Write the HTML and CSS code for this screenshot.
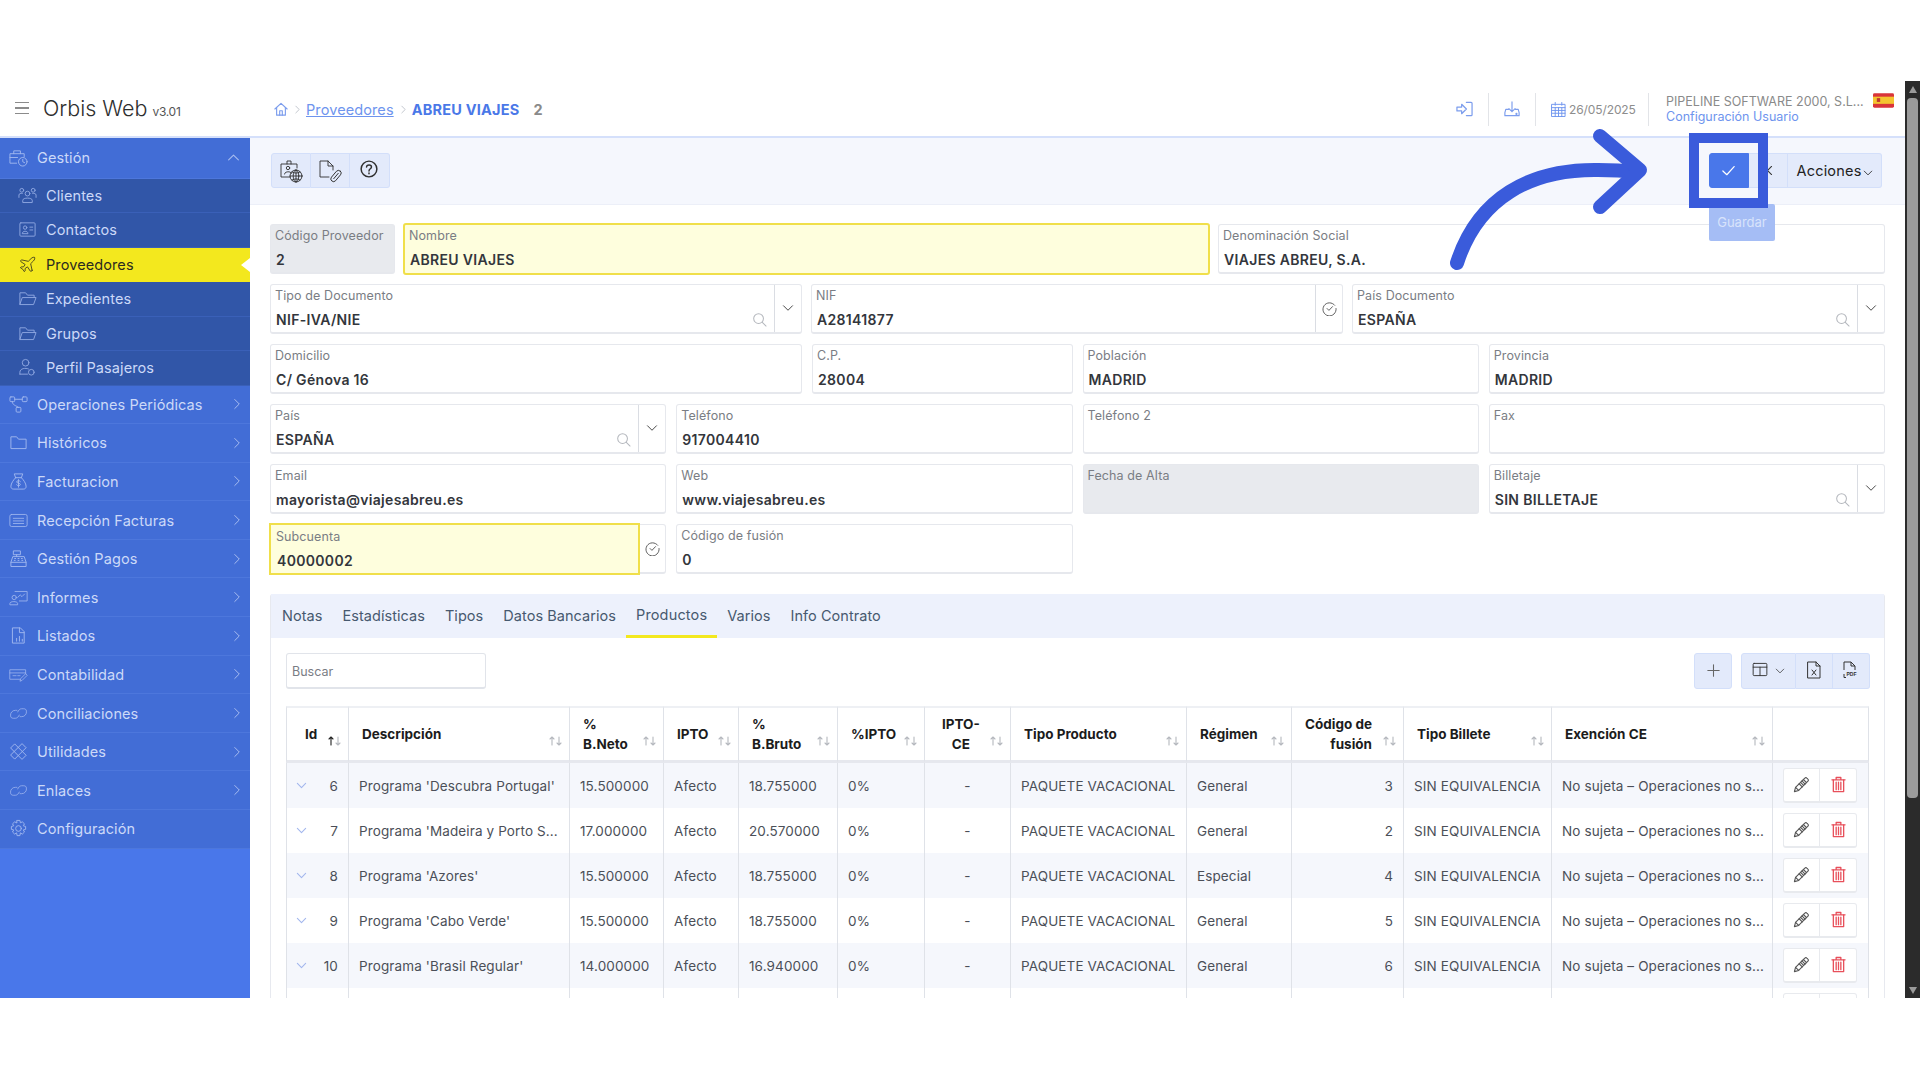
FILE: index.html
```html
<!DOCTYPE html>
<html lang="es">
<head>
  <meta charset="UTF-8">
  <title>Orbis Web - Proveedores</title>
  <link rel="stylesheet" href="styles.css">
</head>
<body>
  <svg class="sprite" width="0" height="0">
    <symbol id="i-chev-down" viewBox="0 0 16 16"><path d="M2 5l6 6 6-6"/></symbol>
    <symbol id="i-chev-right" viewBox="0 0 16 16"><path d="M5 2l6 6-6 6"/></symbol>
    <symbol id="i-chev-up" viewBox="0 0 16 16"><path d="M2 11l6-6 6 6"/></symbol>
    <symbol id="i-search" viewBox="0 0 16 16"><circle cx="7" cy="7" r="5.2"/><path d="M11 11l4 4"/></symbol>
    <symbol id="i-circle-check" viewBox="0 0 16 16"><path d="M13.6 4.6A7 7 0 1 0 15 8"/><path d="M5.4 8l2 2 3.8-4"/></symbol>
    <symbol id="i-home" viewBox="0 0 16 16"><path d="M1 8l7-6.5L15 8"/><path d="M3 6.5V15h10V6.5"/><path d="M6.5 15v-5h3v5"/></symbol>
    <symbol id="i-login" viewBox="0 0 18 16"><path d="M1 6h5V3l5 5-5 5v-3H1z"/><path d="M11 1h5a1 1 0 0 1 1 1v12a1 1 0 0 1-1 1h-5"/></symbol>
    <symbol id="i-download" viewBox="0 0 18 18"><path d="M9 1v11M5.5 8.5L9 12l3.5-3.5"/><path d="M5 9.5H2L1 13v3.5h16V13l-1-3.500h-3"/><circle cx="14" cy="14.500" r=".6"/></symbol>
    <symbol id="i-calendar" viewBox="0 0 16 16"><rect x="1" y="2.500" width="14" height="13"/><path d="M1 6h14M1 9h14M1 12h14M4.500 6v9.500M8 6v9.500M11.500 6v9.500M4.500 .5v3M11.500 .5v3"/></symbol>
    <symbol id="i-id-globe" viewBox="0 0 24 24"><path d="M11 18H2V5h16v4"/><path d="M8 5V2h4v3"/><circle cx="9" cy="9" r="1.700"/><path d="M5.500 15c0-3 7-3 7-.5"/><circle cx="17" cy="17" r="6"/><path d="M11 17h12M17 11v12M13 13c3 1.500 5 1.500 8 0M13 21c3-1.500 5-1.500 8 0"/><ellipse cx="17" cy="17" rx="2.800" ry="6"/></symbol>
    <symbol id="i-file-clip" viewBox="0 0 24 24"><path d="M11 18H2V2h8l5 5v4"/><path d="M10 2v5h5"/><g transform="rotate(40 18 17)"><rect x="15.300" y="10.500" width="5.400" height="13" rx="2.700"/><path d="M18 13.500v7"/></g></symbol>
    <symbol id="i-help" viewBox="0 0 16 16"><circle cx="8" cy="8" r="7"/><path d="M5.800 6.200C6 3.800 10.200 3.800 10.200 6.200 10.200 7.800 8 7.800 8 9.700"/><path d="M8 11.500v.8"/></symbol>
    <symbol id="i-check" viewBox="0 0 16 16"><path d="M2 8.500L6.200 12.500 14 3.800"/></symbol>
    <symbol id="i-x" viewBox="0 0 16 16"><path d="M3 3l10 10M13 3L3 13"/></symbol>
    <symbol id="i-plus" viewBox="0 0 16 16"><path d="M8 1v14M1 8h14"/></symbol>
    <symbol id="i-columns" viewBox="0 0 16 16"><rect x=".7" y="1.500" width="14.600" height="13" rx="1"/><path d="M.7 5.500h14.600M8 5.500v9"/></symbol>
    <symbol id="i-file-x" viewBox="0 0 14 18"><path d="M1 1h8l4 4v12H1z"/><path d="M9 1v4h4"/><path d="M5 9l4 5M9 9l-4 5"/></symbol>
    <symbol id="i-pencil" viewBox="0 0 18 18"><path d="M1.500 16.500l1.200-4.500L12.500 2.200a1.500 1.500 0 0 1 2.200 0l1.100 1.100a1.500 1.500 0 0 1 0 2.200L6 15.300z"/><path d="M11 3.700l3.300 3.300M9.500 5.200l3.300 3.300M8 6.700l3.300 3.300M6.500 8.200l3.300 3.300M2.700 12l3.300 3.300"/></symbol>
    <symbol id="i-trash" viewBox="0 0 16 18"><path d="M1 4h14M5.500 4V1.500h5V4"/><path d="M2.500 4v12.500h11V4"/><path d="M5.500 6.500v8M8 6.500v8M10.500 6.500v8"/></symbol>
    <symbol id="i-briefcase" viewBox="0 0 20 20"><path d="M8 16H1V6h15v3"/><path d="M5 6V3h7v3M1 10h8"/><circle cx="14.500" cy="14.500" r="4.500"/><path d="M14.500 12v2.500l2 1"/></symbol>
    <symbol id="i-users" viewBox="0 0 20 20"><circle cx="10" cy="8" r="2.500"/><circle cx="4" cy="4.500" r="2"/><circle cx="16" cy="4.500" r="2"/><path d="M5 17v-2c0-3 10-3 10 0v2z"/><path d="M1 12V9.500c0-1.500 2-2 3.500-1.700M19 12V9.500c0-1.500-2-2-3.500-1.700"/></symbol>
    <symbol id="i-contact" viewBox="0 0 20 20"><rect x="2" y="3" width="16" height="14" rx="1"/><circle cx="7.500" cy="8" r="1.800"/><path d="M4.500 14c0-3 6-3 6 0zM12.500 7.500h3M12.500 10.500h3"/></symbol>
    <symbol id="i-plane" viewBox="0 0 24 24"><path d="M17.800 19.200L16 11l3.500-3.500C21 6 21.500 4 21 3c-1-.5-3 0-4.500 1.500L13 8 4.800 6.200c-.5-.1-.9.1-1.100.5l-.3.5c-.2.5-.1 1 .3 1.300L9 12l-2 3H4l-1 1 3 2 2 3 1-1v-3l3-2 3.500 5.300c.3.400.8.500 1.300.3l.5-.2c.4-.3.6-.7.500-1.200z"/></symbol>
    <symbol id="i-folder-open" viewBox="0 0 20 20"><path d="M2 16V4h6l2 2.500h7V9"/><path d="M2 16l2.500-7H19l-2.500 7z"/></symbol>
    <symbol id="i-passenger" viewBox="0 0 20 20"><circle cx="8" cy="5" r="3.500"/><path d="M2 17v-2c0-4 6-5 9-3.500"/><path d="M2 17h8"/><circle cx="14" cy="15" r="3"/></symbol>
    <symbol id="i-nodes" viewBox="0 0 20 20"><rect x="1" y="2" width="5" height="5" rx="1"/><rect x="14" y="2" width="5" height="5" rx="1"/><rect x="7.500" y="13" width="5" height="5" rx="1"/><path d="M6 4.500h8M3.500 7c0 4 4 4 6.500 6"/></symbol>
    <symbol id="i-folder" viewBox="0 0 20 20"><path d="M2 16V4h6l2 2.500h8V16z"/></symbol>
    <symbol id="i-bag" viewBox="0 0 20 20"><path d="M7 6L5.500 2h9L13 6"/><path d="M7 6h6c2 2 5 6 5 9 0 2-1 3-3 3H5c-2 0-3-1-3-3 0-3 3-7 5-9z"/><path d="M12 10c-1-1.500-4-1-4 .5s4 1 4 2.500-3 2-4 .5M10 8v8"/></symbol>
    <symbol id="i-list-box" viewBox="0 0 22 20"><rect x="1" y="3" width="20" height="14" rx="2"/><path d="M5 7.500h12M5 10.500h12M5 13.500h12"/></symbol>
    <symbol id="i-register" viewBox="0 0 20 20"><path d="M2 18v-4l2-6h12l2 6v4z"/><path d="M2 14h16"/><rect x="5" y="2" width="7" height="4"/><path d="M8 6v2M6 10h1M9.500 10h1M13 10h1M5.500 12h1M9.500 12h1M13.500 12h1"/></symbol>
    <symbol id="i-report" viewBox="0 0 22 20"><path d="M7 3h14v11H12"/><path d="M10 10l3-3 2 2 3-3"/><circle cx="6" cy="10" r="2.500"/><path d="M1 18v-1c0-3 9-3 9 0v1z"/></symbol>
    <symbol id="i-file-bars" viewBox="0 0 20 20"><path d="M4 2h8l4 4v12H4z"/><path d="M11 2v5h5"/><path d="M8 16v-3M11 16v-5M14 16v-2"/></symbol>
    <symbol id="i-card-pen" viewBox="0 0 24 20"><path d="M14 16H1V4h20v5"/><path d="M1 8h20"/><path d="M5 11.500h4M11 11.500h3"/><path d="M14 18l1-3 6-6 2 2-6 6z"/></symbol>
    <symbol id="i-link" viewBox="0 0 24 20"><path d="M10 6H8a6 6 0 0 0-6 7c0 2 1.500 3 3.500 3H8c2.500 0 4-2 5-4"/><path d="M14 14h2a6 6 0 0 0 6-7c0-2-1.500-3-3.500-3H16c-2.500 0-4 2-5 4"/></symbol>
    <symbol id="i-tools" viewBox="0 0 20 20"><path d="M2 6l4-4 12 12-4 4z"/><path d="M14 2l4 4-12 12-4-4z"/></symbol>
    <symbol id="i-gear" viewBox="0 0 20 20"><circle cx="10" cy="10" r="3"/><path d="M8.500 1.500h3l.5 2.500 2-1 2.300 2.100-1.300 2 2.500.8v3l-2.500.6 1.300 2.200-2.300 2.200-2-1.300-.5 2.900h-3l-.5-2.900-2 1.300-2.300-2.200 1.300-2.200-2.500-.6v-3l2.500-.8-1.300-2 2.300-2.100 2 1z"/></symbol>
    <symbol id="i-sort" viewBox="0 0 13 10"><path class="sort-up" d="M3 9V1M1 3l2-2 2 2"/><path d="M10 1v8M8 7l2 2 2-2"/></symbol>
  </svg>

  <div class="page">
    <div class="frame">
      <header class="topbar">
        <div class="brand">
          <div class="burger"><span></span><span></span><span></span></div>
          <span class="brand-name">Orbis Web</span>
          <span class="brand-version">v3.01</span>
        </div>
        <nav class="crumbs">
          <svg class="ic crumb-home"><use href="#i-home"/></svg>
          <svg class="ic crumb-sep"><use href="#i-chev-right"/></svg>
          <a class="crumb-link">Proveedores</a>
          <svg class="ic crumb-sep"><use href="#i-chev-right"/></svg>
          <span class="crumb-current">ABREU VIAJES</span>
          <span class="crumb-id">2</span>
        </nav>
        <div class="top-tools">
          <div class="top-cell"><svg class="ic top-icon login"><use href="#i-login"/></svg></div>
          <div class="top-cell"><svg class="ic top-icon"><use href="#i-download"/></svg></div>
          <div class="top-cell date-cell"><svg class="ic top-icon cal"><use href="#i-calendar"/></svg><span>26/05/2025</span></div>
          <div class="user-cell">
            <div class="company">PIPELINE SOFTWARE 2000, S.L...</div>
            <a class="user-config">Configuración Usuario</a>
          </div>
          <svg class="flag" viewBox="0 0 22 15"><rect width="22" height="15" rx="1.500" fill="#d9343a"/><rect y="3.500" width="22" height="7.500" fill="#f4c430"/><rect x="4" y="5" width="3.500" height="4" fill="#c0392b"/></svg>
        </div>
      </header>

      <div class="app">
        <aside class="sidebar">
          <div class="nav-item nav-open"><svg class="ic nav-icon"><use href="#i-briefcase"/></svg><span>Gestión</span><svg class="ic nav-chev up"><use href="#i-chev-up"/></svg></div>
          <div class="sub-item"><svg class="ic nav-icon"><use href="#i-users"/></svg><span>Clientes</span></div>
          <div class="sub-item"><svg class="ic nav-icon"><use href="#i-contact"/></svg><span>Contactos</span></div>
          <div class="sub-item active"><svg class="ic nav-icon"><use href="#i-plane"/></svg><span>Proveedores</span></div>
          <div class="sub-item"><svg class="ic nav-icon"><use href="#i-folder-open"/></svg><span>Expedientes</span></div>
          <div class="sub-item"><svg class="ic nav-icon"><use href="#i-folder-open"/></svg><span>Grupos</span></div>
          <div class="sub-item"><svg class="ic nav-icon"><use href="#i-passenger"/></svg><span>Perfil Pasajeros</span></div>
          <div class="nav-item"><svg class="ic nav-icon"><use href="#i-nodes"/></svg><span>Operaciones Periódicas</span><svg class="ic nav-chev"><use href="#i-chev-right"/></svg></div>
          <div class="nav-item"><svg class="ic nav-icon"><use href="#i-folder"/></svg><span>Históricos</span><svg class="ic nav-chev"><use href="#i-chev-right"/></svg></div>
          <div class="nav-item"><svg class="ic nav-icon"><use href="#i-bag"/></svg><span>Facturacion</span><svg class="ic nav-chev"><use href="#i-chev-right"/></svg></div>
          <div class="nav-item"><svg class="ic nav-icon"><use href="#i-list-box"/></svg><span>Recepción Facturas</span><svg class="ic nav-chev"><use href="#i-chev-right"/></svg></div>
          <div class="nav-item"><svg class="ic nav-icon"><use href="#i-register"/></svg><span>Gestión Pagos</span><svg class="ic nav-chev"><use href="#i-chev-right"/></svg></div>
          <div class="nav-item"><svg class="ic nav-icon"><use href="#i-report"/></svg><span>Informes</span><svg class="ic nav-chev"><use href="#i-chev-right"/></svg></div>
          <div class="nav-item"><svg class="ic nav-icon"><use href="#i-file-bars"/></svg><span>Listados</span><svg class="ic nav-chev"><use href="#i-chev-right"/></svg></div>
          <div class="nav-item"><svg class="ic nav-icon"><use href="#i-card-pen"/></svg><span>Contabilidad</span><svg class="ic nav-chev"><use href="#i-chev-right"/></svg></div>
          <div class="nav-item"><svg class="ic nav-icon"><use href="#i-link"/></svg><span>Conciliaciones</span><svg class="ic nav-chev"><use href="#i-chev-right"/></svg></div>
          <div class="nav-item"><svg class="ic nav-icon"><use href="#i-tools"/></svg><span>Utilidades</span><svg class="ic nav-chev"><use href="#i-chev-right"/></svg></div>
          <div class="nav-item"><svg class="ic nav-icon"><use href="#i-link"/></svg><span>Enlaces</span><svg class="ic nav-chev"><use href="#i-chev-right"/></svg></div>
          <div class="nav-item"><svg class="ic nav-icon"><use href="#i-gear"/></svg><span>Configuración</span></div>
        </aside>

        <main class="workspace">
          <div class="toolbar">
            <div class="btn-group">
              <button class="tool-btn"><svg class="ic tool-icon"><use href="#i-id-globe"/></svg></button>
              <button class="tool-btn"><svg class="ic tool-icon"><use href="#i-file-clip"/></svg></button>
              <button class="tool-btn"><svg class="ic tool-help"><use href="#i-help"/></svg></button>
            </div>
            <div class="btn-group">
              <button class="tool-btn save-btn"><svg class="ic save-icon"><use href="#i-check"/></svg></button>
              <button class="tool-btn"><svg class="ic close-icon"><use href="#i-x"/></svg></button>
              <button class="tool-btn actions-btn">Acciones<svg class="ic actions-chev"><use href="#i-chev-down"/></svg></button>
            </div>
          </div>

          <section class="form">
            <div class="form-row row-head">
              <div class="field readonly"><label>Código Proveedor</label><div class="value">2</div></div>
              <div class="field required"><label>Nombre</label><div class="value">ABREU VIAJES</div></div>
              <div class="field"><label>Denominación Social</label><div class="value">VIAJES ABREU, S.A.</div></div>
            </div>
            <div class="form-row row-thirds">
              <div class="field combo">
                <div class="field-main"><label>Tipo de Documento</label><div class="value">NIF-IVA/NIE<svg class="ic field-search"><use href="#i-search"/></svg></div></div>
                <div class="addon"><svg class="ic addon-chev"><use href="#i-chev-down"/></svg></div>
              </div>
              <div class="field combo">
                <div class="field-main"><label>NIF</label><div class="value">A28141877</div></div>
                <div class="addon"><svg class="ic addon-check"><use href="#i-circle-check"/></svg></div>
              </div>
              <div class="field combo">
                <div class="field-main"><label>País Documento</label><div class="value">ESPAÑA<svg class="ic field-search"><use href="#i-search"/></svg></div></div>
                <div class="addon"><svg class="ic addon-chev"><use href="#i-chev-down"/></svg></div>
              </div>
            </div>
            <div class="form-row row-address">
              <div class="field"><label>Domicilio</label><div class="value">C/ Génova 16</div></div>
              <div class="field"><label>C.P.</label><div class="value">28004</div></div>
              <div class="field"><label>Población</label><div class="value">MADRID</div></div>
              <div class="field"><label>Provincia</label><div class="value">MADRID</div></div>
            </div>
            <div class="form-row row-quarters">
              <div class="field combo">
                <div class="field-main"><label>País</label><div class="value">ESPAÑA<svg class="ic field-search"><use href="#i-search"/></svg></div></div>
                <div class="addon"><svg class="ic addon-chev"><use href="#i-chev-down"/></svg></div>
              </div>
              <div class="field"><label>Teléfono</label><div class="value">917004410</div></div>
              <div class="field"><label>Teléfono 2</label><div class="value"></div></div>
              <div class="field"><label>Fax</label><div class="value"></div></div>
            </div>
            <div class="form-row row-quarters">
              <div class="field"><label>Email</label><div class="value">mayorista@viajesabreu.es</div></div>
              <div class="field"><label>Web</label><div class="value">www.viajesabreu.es</div></div>
              <div class="field readonly"><label>Fecha de Alta</label><div class="value"></div></div>
              <div class="field combo">
                <div class="field-main"><label>Billetaje</label><div class="value">SIN BILLETAJE<svg class="ic field-search"><use href="#i-search"/></svg></div></div>
                <div class="addon"><svg class="ic addon-chev"><use href="#i-chev-down"/></svg></div>
              </div>
            </div>
            <div class="form-row row-quarters">
              <div class="field combo">
                <div class="field-main required"><label>Subcuenta</label><div class="value">40000002</div></div>
                <div class="addon plain"><svg class="ic addon-check"><use href="#i-circle-check"/></svg></div>
              </div>
              <div class="field"><label>Código de fusión</label><div class="value">0</div></div>
            </div>
          </section>

          <section class="tabs-panel">
            <div class="tabs">
              <a class="tab">Notas</a>
              <a class="tab">Estadísticas</a>
              <a class="tab">Tipos</a>
              <a class="tab">Datos Bancarios</a>
              <a class="tab active">Productos</a>
              <a class="tab">Varios</a>
              <a class="tab">Info Contrato</a>
            </div>
            <div class="tab-body">
              <div class="table-tools">
                <div class="search-box">Buscar</div>
                <div class="table-actions">
                  <div class="btn-group"><button class="tool-btn add-btn"><svg class="ic plus-icon"><use href="#i-plus"/></svg></button></div>
                  <div class="btn-group">
                    <button class="tool-btn columns-btn"><svg class="ic columns-icon"><use href="#i-columns"/></svg><svg class="ic columns-chev"><use href="#i-chev-down"/></svg></button>
                    <button class="tool-btn export-btn"><svg class="ic file-icon"><use href="#i-file-x"/></svg></button>
                    <button class="tool-btn export-btn"><svg class="file-pdf" viewBox="0 0 18 18"><path d="M2 9V1h7l4 4v4M9 1v4h4M2 13v3.500h2"/><text x="4.500" y="14.500" class="pdf-label">PDF</text></svg></button>
                  </div>
                </div>
              </div>

              <table class="grid">
                <thead>
                  <tr>
                    <th class="th-id"><div class="th-in"><span>Id</span><svg class="ic sort sorted"><use href="#i-sort"/></svg></div></th>
                    <th><div class="th-in"><span>Descripción</span><svg class="ic sort"><use href="#i-sort"/></svg></div></th>
                    <th><div class="th-in"><span>%<br>B.Neto</span><svg class="ic sort"><use href="#i-sort"/></svg></div></th>
                    <th><div class="th-in"><span>IPTO</span><svg class="ic sort"><use href="#i-sort"/></svg></div></th>
                    <th><div class="th-in"><span>%<br>B.Bruto</span><svg class="ic sort"><use href="#i-sort"/></svg></div></th>
                    <th><div class="th-in"><span>%IPTO</span><svg class="ic sort"><use href="#i-sort"/></svg></div></th>
                    <th><div class="th-in th-center"><span>IPTO-<br>CE</span><svg class="ic sort"><use href="#i-sort"/></svg></div></th>
                    <th><div class="th-in"><span>Tipo Producto</span><svg class="ic sort"><use href="#i-sort"/></svg></div></th>
                    <th><div class="th-in"><span>Régimen</span><svg class="ic sort"><use href="#i-sort"/></svg></div></th>
                    <th><div class="th-in th-right"><span>Código de<br>fusión</span><svg class="ic sort"><use href="#i-sort"/></svg></div></th>
                    <th><div class="th-in"><span>Tipo Billete</span><svg class="ic sort"><use href="#i-sort"/></svg></div></th>
                    <th><div class="th-in"><span>Exención CE</span><svg class="ic sort"><use href="#i-sort"/></svg></div></th>
                    <th></th>
                  </tr>
                </thead>
                <tbody>
                  <tr>
                    <td class="td-id"><svg class="ic row-chev"><use href="#i-chev-down"/></svg>6</td>
                    <td>Programa 'Descubra Portugal'</td><td>15.500000</td><td>Afecto</td><td>18.755000</td><td>0%</td><td class="center">-</td>
                    <td>PAQUETE VACACIONAL</td><td>General</td><td class="right">3</td><td>SIN EQUIVALENCIA</td><td>No sujeta – Operaciones no s...</td>
                    <td><div class="row-actions"><button><svg class="ic pencil"><use href="#i-pencil"/></svg></button><button><svg class="ic trash"><use href="#i-trash"/></svg></button></div></td>
                  </tr>
                  <tr>
                    <td class="td-id"><svg class="ic row-chev"><use href="#i-chev-down"/></svg>7</td>
                    <td>Programa 'Madeira y Porto S...</td><td>17.000000</td><td>Afecto</td><td>20.570000</td><td>0%</td><td class="center">-</td>
                    <td>PAQUETE VACACIONAL</td><td>General</td><td class="right">2</td><td>SIN EQUIVALENCIA</td><td>No sujeta – Operaciones no s...</td>
                    <td><div class="row-actions"><button><svg class="ic pencil"><use href="#i-pencil"/></svg></button><button><svg class="ic trash"><use href="#i-trash"/></svg></button></div></td>
                  </tr>
                  <tr>
                    <td class="td-id"><svg class="ic row-chev"><use href="#i-chev-down"/></svg>8</td>
                    <td>Programa 'Azores'</td><td>15.500000</td><td>Afecto</td><td>18.755000</td><td>0%</td><td class="center">-</td>
                    <td>PAQUETE VACACIONAL</td><td>Especial</td><td class="right">4</td><td>SIN EQUIVALENCIA</td><td>No sujeta – Operaciones no s...</td>
                    <td><div class="row-actions"><button><svg class="ic pencil"><use href="#i-pencil"/></svg></button><button><svg class="ic trash"><use href="#i-trash"/></svg></button></div></td>
                  </tr>
                  <tr>
                    <td class="td-id"><svg class="ic row-chev"><use href="#i-chev-down"/></svg>9</td>
                    <td>Programa 'Cabo Verde'</td><td>15.500000</td><td>Afecto</td><td>18.755000</td><td>0%</td><td class="center">-</td>
                    <td>PAQUETE VACACIONAL</td><td>General</td><td class="right">5</td><td>SIN EQUIVALENCIA</td><td>No sujeta – Operaciones no s...</td>
                    <td><div class="row-actions"><button><svg class="ic pencil"><use href="#i-pencil"/></svg></button><button><svg class="ic trash"><use href="#i-trash"/></svg></button></div></td>
                  </tr>
                  <tr>
                    <td class="td-id"><svg class="ic row-chev"><use href="#i-chev-down"/></svg>10</td>
                    <td>Programa 'Brasil Regular'</td><td>14.000000</td><td>Afecto</td><td>16.940000</td><td>0%</td><td class="center">-</td>
                    <td>PAQUETE VACACIONAL</td><td>General</td><td class="right">6</td><td>SIN EQUIVALENCIA</td><td>No sujeta – Operaciones no s...</td>
                    <td><div class="row-actions"><button><svg class="ic pencil"><use href="#i-pencil"/></svg></button><button><svg class="ic trash"><use href="#i-trash"/></svg></button></div></td>
                  </tr>
                  <tr>
                    <td></td><td></td><td></td><td></td><td></td><td></td><td></td><td></td><td></td><td></td><td></td><td></td>
                    <td><div class="row-actions"><button></button><button></button></div></td>
                  </tr>
                </tbody>
              </table>
            </div>
          </section>
        </main>
      </div>
    </div>

    <div class="scrollbar">
      <div class="scroll-arrow arrow-up"></div>
      <div class="scroll-track"><div class="scroll-thumb"></div></div>
      <div class="scroll-arrow arrow-down"></div>
    </div>

    <div class="tooltip">Guardar</div>
    <svg class="annotation" viewBox="0 0 1920 1080">
      <path d="M1457 263C1478 198 1530 169 1598 170Q1620 170 1634 172"/>
      <path d="M1600 136L1640 170L1600 207"/>
      <rect x="1694" y="138" width="69" height="65"/>
    </svg>
  </div>
</body>
</html>
```

FILE: styles.css
```css
:root {
  --blue: #4977ea;
  --blue-item: #426dd6;
  --blue-sub: #3156a8;
  --blue-line: #4d77dc;
  --yellow: #f3e81e;
  --btn-bg: #e3eafb;
  --btn-line: #d3dffa;
  --line: #dfe2e8;
  --field-line: #e6e8ed;
  --text: #4b4f58;
}

* { box-sizing: border-box; }

body {
  margin: 0;
  background: #fff;
  font-family: Inter, "Open Sans", sans-serif;
  color: var(--text);
  overflow: hidden;
}

.sprite { position: absolute; }

.ic {
  fill: none;
  stroke: currentColor;
  stroke-width: 1.3;
  stroke-linecap: round;
  stroke-linejoin: round;
  flex: none;
}

.page {
  position: relative;
  display: flex;
  width: 1920px;
  height: 1080px;
  padding-top: 82px;
}

.frame { width: 1905px; height: 916px; flex: none; }

/* top bar */
.topbar {
  display: flex;
  align-items: center;
  height: 56px;
  padding-right: 11px;
  border-bottom: 2px solid #d5e0fb;
}

.brand {
  display: flex;
  align-items: baseline;
  width: 274px;
  padding-left: 15px;
  margin-top: -2px;
}

.burger {
  display: flex;
  flex-direction: column;
  gap: 4px;
  width: 14px;
  margin-right: 14px;
  align-self: center;
}
.burger span { height: 1.5px; background: #8b8b8b; }

.brand-name { font-size: 21.5px; font-weight: 300; color: #2e2e2e; }
.brand-version { margin-left: 5px; font-size: 12px; color: #555; letter-spacing: -.3px; }

.crumbs { display: flex; align-items: center; flex: 1; font-size: 14.5px; }
.crumb-home { width: 14px; height: 14px; color: #7c9ded; }
.crumb-sep { width: 9px; height: 9px; margin: 0 4px 0 5px; color: #aeb3bd; }
.crumb-link { color: #6e94ee; text-decoration: underline; letter-spacing: .1px; }
.crumb-current { color: #4a78e8; font-weight: 700; letter-spacing: .2px; }
.crumb-id { margin-left: 14px; color: #8a8a8a; font-weight: 700; }

.top-tools { display: flex; align-items: center; }
.top-cell {
  display: flex;
  align-items: center;
  height: 33px;
  padding: 0 15px;
  border-right: 1px solid #e2e4e8;
  color: #7c9ded;
}
.top-icon { width: 16px; height: 16px; }
.top-icon.login { width: 17px; }
.date-cell { width: 113px; font-size: 12px; color: #8d8d8d; gap: 3px; white-space: nowrap; letter-spacing: -.1px; }
.cal { color: #6e94ee; width: 15px; height: 15px; stroke-width: 1; }

.user-cell { width: 224px; padding-left: 17px; font-size: 12.5px; line-height: 15px; }
.company { color: #8a8a8a; white-space: nowrap; }
.user-config { color: #6e94ee; font-size: 12.5px; }
.flag { width: 21px; height: 15px; margin-top: -18px; }

.app { display: flex; height: 860px; overflow: hidden; }

/* sidebar */
.sidebar { width: 250px; flex: none; background: var(--blue); font-size: 14.5px; }

.nav-item {
  display: flex;
  align-items: center;
  height: 38.6px;
  padding: 0 7px 0 9px;
  background: var(--blue-item);
  border-bottom: 1px solid var(--blue-line);
  color: #ccd9f8;
  letter-spacing: .1px;
}
.nav-open { height: 40.5px; }
.nav-icon { width: 19px; height: 19px; margin-right: 9px; color: #9fb6ee; stroke-width: 1; }
.nav-chev { width: 12px; height: 12px; margin-left: auto; color: #a9bdf0; }
.nav-chev.up { margin-right: 3px; width: 13px; height: 13px; }

.sub-item {
  position: relative;
  display: flex;
  align-items: center;
  height: 34.5px;
  padding-left: 18px;
  background: var(--blue-sub);
  border-bottom: 1px solid #3a60b8;
  color: #ccd9f8;
  letter-spacing: .1px;
}
.sub-item .nav-icon { margin-right: 9px; color: #8ea6e0; }
.sub-item.active { background: var(--yellow); color: #2b2b20; border-bottom: none; }
.sub-item.active .nav-icon { color: #2b2b20; }
.sub-item.active::after {
  content: "";
  position: absolute;
  right: 0;
  top: 50%;
  margin-top: -7px;
  border: 7px solid transparent;
  border-right: 9px solid #fff;
  border-left: none;
}

/* main area */
.workspace { width: 1655px; flex: none; overflow: hidden; }

.toolbar {
  display: flex;
  justify-content: space-between;
  height: 67px;
  padding: 15px 23px 0 21px;
  background: #f5f7fd;
  border-bottom: 1px solid #eceff8;
}

.btn-group { display: flex; height: 35px; }

.tool-btn {
  display: flex;
  align-items: center;
  justify-content: center;
  width: 39.5px;
  height: 35px;
  padding: 0;
  background: var(--btn-bg);
  border: 1px solid var(--btn-line);
  border-left-width: 0;
  color: #333;
  font: inherit;
}
.tool-btn:first-child { border-left-width: 1px; border-radius: 3px 0 0 3px; }
.tool-btn:last-child { border-radius: 0 3px 3px 0; }
.tool-btn:only-child { border-radius: 3px; }

.tool-icon { width: 24px; height: 24px; stroke-width: .9; color: #2f2f2f; }
.tool-help { width: 18px; height: 18px; margin-top: -4px; color: #2f2f2f; }
.save-btn { background: var(--blue); border-color: var(--blue); color: #fff; }
.save-icon { width: 15px; height: 15px; }
.close-icon { width: 13px; height: 13px; }
.actions-btn { width: 94px; font-size: 14.5px; color: #222; letter-spacing: .2px; }
.actions-chev { width: 10px; height: 10px; margin: 4px 0 0 1px; }

/* form */
.form { display: flex; flex-direction: column; gap: 10px; padding: 19px 20px 0; }

.form-row { display: grid; gap: 10px; height: 50px; }
.row-head { grid-template-columns: 125px 805px 1fr; gap: 9px; }
.row-thirds { grid-template-columns: 532px 532px 1fr; gap: 9px; }
.row-address { grid-template-columns: 532px 260.5px 1fr 1fr; }
.row-quarters { grid-template-columns: repeat(4, 1fr); }

.field {
  min-width: 0;
  padding: 2px 4px 0;
  background: #fff;
  border: 1px solid var(--field-line);
  border-bottom-width: 2px;
  border-radius: 3px;
}

.field label { display: block; height: 18px; font-size: 12.5px; line-height: 18px; color: #7a7d84; letter-spacing: .1px; }

.value {
  display: flex;
  align-items: center;
  justify-content: space-between;
  height: 22px;
  margin-top: 3px;
  padding-left: 1px;
  font-size: 14px;
  font-weight: 600;
  color: #33363c;
  letter-spacing: .32px;
}

.readonly { background: #e8eaee; }
.required { background: #fefedd; border: 2px solid #f0df4a; margin: -1px; padding: 2px 4px 0; }

.field.combo { display: flex; padding: 0; }
.field-main { flex: 1; min-width: 0; padding: 2px 4px 0; }
.field-search { width: 15px; height: 15px; margin-right: 3px; color: #b4b7bd; stroke-width: 1.1; }

.addon {
  display: flex;
  align-items: center;
  justify-content: center;
  width: 27px;
  flex: none;
  border-left: 1px solid #dadde3;
}
.addon.plain { border-left: none; width: 25px; }
.addon-chev { width: 12px; height: 12px; margin-top: -1px; color: #444; }
.addon-check { width: 15px; height: 15px; margin-top: -1px; color: #555; stroke-width: 1; }

.field-main.required { margin: -2px 0 -3px -2px; padding: 3px 5px 0 5px; }

/* tabs */
.tabs-panel {
  margin: 20px 20px 0;
  border: 1px solid #e7e9ef;
  border-top: none;
  border-radius: 3px 3px 0 0;
}

.tabs {
  display: flex;
  height: 44px;
  padding-left: 1px;
  background: #edf1fc;
}

.tab {
  display: flex;
  align-items: center;
  height: 44px;
  padding: 0 10px 2px;
  font-size: 14.5px;
  color: #47596f;
  letter-spacing: .05px;
}
.tab.active { padding-bottom: 0; border-bottom: 3px solid var(--yellow); letter-spacing: .15px; }

.tab-body { padding: 15px 15px 0; }

.table-tools { display: flex; justify-content: space-between; height: 53px; }

.search-box {
  width: 200px;
  height: 36px;
  padding: 0 5px;
  border: 1px solid #e1e4ea;
  border-bottom-width: 2px;
  border-radius: 3px;
  font-size: 12.5px;
  line-height: 35px;
  color: #7a7d84;
}

.table-actions { display: flex; gap: 9px; margin-right: -1px; }
.table-actions .btn-group, .table-actions .tool-btn { height: 36px; }
.add-btn { width: 38px; }
.plus-icon { width: 13px; height: 13px; margin-top: -2px; color: #666; }
.columns-btn { width: 55px; gap: 7px; }
.columns-icon { width: 16px; height: 15px; margin-top: -3px; color: #333; stroke-width: 1; }
.columns-chev { width: 10px; height: 10px; color: #444; }
.export-btn { width: 37px; }
.file-icon { width: 14px; height: 18px; margin-top: -3px; color: #333; stroke-width: 1; }
.file-pdf { width: 18px; height: 18px; margin-top: -3px; fill: none; stroke: #333; stroke-width: 1; }
.pdf-label { font: 700 5px "Liberation Sans", sans-serif; fill: #333; stroke: none; }

/* table */
.grid {
  width: 1583px;
  table-layout: fixed;
  border-collapse: separate;
  border-spacing: 0;
  font-size: 13.5px;
  color: var(--text);
}

.grid th:nth-child(1) { width: 63px; }
.grid th:nth-child(2) { width: 221px; }
.grid th:nth-child(3) { width: 94px; }
.grid th:nth-child(4) { width: 75px; }
.grid th:nth-child(5) { width: 99px; }
.grid th:nth-child(6) { width: 87px; }
.grid th:nth-child(7) { width: 86px; }
.grid th:nth-child(8) { width: 176px; }
.grid th:nth-child(9) { width: 105px; }
.grid th:nth-child(10) { width: 112px; }
.grid th:nth-child(11) { width: 148px; }
.grid th:nth-child(12) { width: 221px; }

.grid th {
  height: 57px;
  padding: 0 7px 0 13px;
  border-top: 2px solid #eef0f4;
  border-bottom: 3px solid #e6e8ee;
  border-right: 1px solid var(--line);
  font-size: 13.5px;
  font-weight: 700;
  line-height: 20px;
  color: #1c1c1c;
  text-align: left;
}
.grid th:first-child, .grid td:first-child { border-left: 1px solid var(--line); }
.grid .th-id { padding-left: 18px; }

.th-in { display: flex; align-items: center; justify-content: space-between; }
.th-center span { margin-left: 4px; text-align: center; }
.th-right span { margin-left: auto; margin-right: 11px; text-align: right; }

.sort { width: 13px; height: 10px; margin-top: 13px; color: #b5b8be; stroke-width: 1.100; }
.sort.sorted { --up: #222; }
.sort-up { stroke: var(--up, currentColor); }

.grid td {
  height: 45px;
  padding: 0 10px;
  border-right: 1px solid var(--line);
  white-space: nowrap;
  overflow: hidden;
  letter-spacing: .12px;
}
.grid tbody tr:nth-child(odd) td { background: #f5f7fc; }
.grid tbody tr:last-child td { background: #fff; }

.td-id { text-align: right; }
.row-chev { float: left; width: 11px; height: 11px; margin: 2px 0 0 -1px; color: #a3b7ee; stroke-width: 1.6; }
.center { text-align: center; }
.right { text-align: right; }

.row-actions { display: flex; width: 74px; height: 35px; }
.row-actions button {
  display: flex;
  align-items: center;
  justify-content: center;
  width: 37px;
  padding: 0;
  background: #fff;
  border: 1px solid #e8eaee;
  border-bottom-width: 2px;
  border-radius: 3px 0 0 3px;
}
.row-actions button + button { border-left: none; border-radius: 0 3px 3px 0; }
.pencil { width: 17px; height: 17px; color: #555; stroke-width: 1.2; margin-top: -1px; }
.trash { width: 15px; height: 17px; color: #e8505b; stroke-width: 1.4; margin-top: -1px; }

/* scrollbar */
.scrollbar {
  display: flex;
  flex-direction: column;
  width: 15px;
  height: 917px;
  flex: none;
  margin-top: -1px;
  background: #2b2b2b;
}
.scroll-track { flex: 1; padding: 0 2px; }
.scroll-thumb { height: 700px; background: #9b9b9b; border-radius: 4px; }
.scroll-arrow { height: 17px; border-left: 4px solid transparent; border-right: 4px solid transparent; margin: 0 3.500px; }
.arrow-up { height: 0; margin-top: 5px; margin-bottom: 5px; border-bottom: 7px solid #9b9b9b; }
.arrow-down { height: 0; margin-top: 3px; margin-bottom: 4px; border-top: 7px solid #9b9b9b; }

/* tutorial overlay */
.tooltip {
  position: absolute;
  left: 1709px;
  top: 204px;
  width: 66px;
  height: 37px;
  background: #a5bdf5;
  border-radius: 2px;
  color: #d8e3fb;
  font-size: 13px;
  line-height: 37px;
  text-align: center;
}

.annotation {
  position: absolute;
  left: 0;
  top: 0;
  width: 1920px;
  height: 1080px;
  fill: none;
  stroke: #3a5bdb;
  stroke-width: 14;
  stroke-linecap: round;
  stroke-linejoin: round;
}
.annotation rect { stroke-width: 10; stroke-linejoin: miter; }
```
